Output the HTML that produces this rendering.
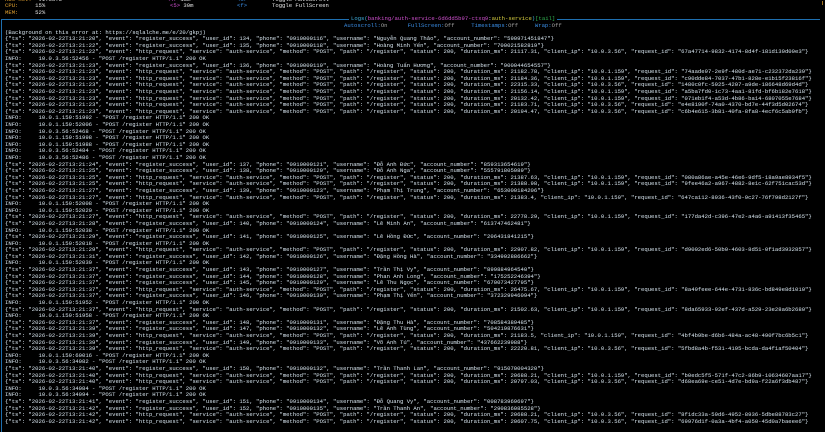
<!DOCTYPE html>
<html><head><meta charset="utf-8"><style>
html,body{margin:0;padding:0;background:#000;width:825px;height:432px;overflow:hidden}
body{position:relative;font-family:"Liberation Mono","DejaVu Sans Mono",monospace;font-size:5.58px;color:#d6e4ee}
.a{position:absolute;white-space:pre;line-height:6.6px}
.o{color:#e0a030}.w{color:#e8e8e8}.m{color:#d050d0}.b{color:#3a8ee6}.c{color:#40b0e0}.y{color:#d8d040}.g{color:#30b050}.gr{color:#a0a0a0}
#log{left:5px;top:29.7px;color:#d6e4ee}
</style></head><body>
<div class="a" style="left:5px;top:-3px"><span class="o">K8s Rev:</span>  <span class="w">v1.33.5</span></div>
<div class="a" style="left:5px;top:3px"><span class="o">CPU:</span>     <span class="w">15%</span></div>
<div class="a" style="left:5px;top:9.5px"><span class="o">MEM:</span>     <span class="w">52%</span></div>
<div class="a" style="left:167px;top:-3px"><span class="m">&lt;4&gt;</span> <span class="w">15m</span></div>
<div class="a" style="left:170px;top:3px"><span class="m">&lt;5&gt;</span> <span class="w">30m</span></div>
<div class="a" style="left:237px;top:-3px"><span class="b">&lt;s&gt;</span></div>
<div class="a" style="left:237px;top:3px"><span class="b">&lt;f&gt;</span></div>
<div class="a" style="left:272px;top:-3px"><span class="w">Toggle AutoScroll</span></div>
<div class="a" style="left:272px;top:3px"><span class="w">Toggle FullScreen</span></div>
<div style="position:absolute;left:822px;top:1px;width:1px;height:4px;background:#a07020"></div>
<div style="position:absolute;left:1px;top:19px;width:819px;height:1px;background:#1e6fb0"></div>
<div style="position:absolute;left:1px;top:19px;width:1px;height:413px;background:#1e6fb0"></div>
<div class="a" style="left:349px;top:15.5px;background:#000;padding:0 2px"><span class="c">Logs(</span><span class="m">banking/auth-service-6d6dd5b97-ctxq9</span><span class="w">:</span><span class="y">auth-service</span><span class="c">)</span><span class="g">[tail]</span></div>
<div class="a" style="left:344px;top:22.5px"><span class="b">Autoscroll:</span><span class="gr">On</span>      <span class="b">FullScreen:</span><span class="gr">Off</span>     <span class="b">Timestamps:</span><span class="gr">Off</span>     <span class="b">Wrap:</span><span class="gr">Off</span></div>
<div class="a" id="log">(Background on this error at: https://sqlalche.me/e/20/gkpj)
{"ts": "2026-02-22T13:21:20", "event": "register_success", "user_id": 134, "phone": "0910000116", "username": "Nguyễn Quang Thảo", "account_number": "590971451847"}
{"ts": "2026-02-22T13:21:22", "event": "register_success", "user_id": 135, "phone": "0910000118", "username": "Hoàng Minh Yến", "account_number": "700021582819"}
{"ts": "2026-02-22T13:21:22", "event": "http_request", "service": "auth-service", "method": "POST", "path": "/register", "status": 200, "duration_ms": 21117.31, "client_ip": "10.0.3.56", "request_id": "67a47714-9832-4174-8d4f-181d130d00e3"}
INFO:     10.0.3.56:52456 - "POST /register HTTP/1.1" 200 OK
{"ts": "2026-02-22T13:21:23", "event": "register_success", "user_id": 136, "phone": "0910000119", "username": "Hoàng Tuấn Hương", "account_number": "900044654557"}
{"ts": "2026-02-22T13:21:23", "event": "http_request", "service": "auth-service", "method": "POST", "path": "/register", "status": 200, "duration_ms": 21182.78, "client_ip": "10.0.1.159", "request_id": "74aade97-2e9f-480d-ae71-c232372da239"}
{"ts": "2026-02-22T13:21:23", "event": "http_request", "service": "auth-service", "method": "POST", "path": "/register", "status": 200, "duration_ms": 21184.36, "client_ip": "10.0.1.159", "request_id": "c90dde84-7037-47b1-828e-e1b15f23816f"}
{"ts": "2026-02-22T13:21:23", "event": "http_request", "service": "auth-service", "method": "POST", "path": "/register", "status": 200, "duration_ms": 22315.33, "client_ip": "10.0.3.56", "request_id": "1480c0fc-5925-4207-a9de-186648d69d4d"}
{"ts": "2026-02-22T13:21:23", "event": "http_request", "service": "auth-service", "method": "POST", "path": "/register", "status": 200, "duration_ms": 21156.14, "client_ip": "10.0.1.159", "request_id": "a5ba7fd0-1c73-4aa1-81fd-bf6b182e7618"}
{"ts": "2026-02-22T13:21:23", "event": "http_request", "service": "auth-service", "method": "POST", "path": "/register", "status": 200, "duration_ms": 20132.42, "client_ip": "10.0.1.159", "request_id": "071eb1f4-a53d-4b86-ba14-6807055e7684"}
{"ts": "2026-02-22T13:21:23", "event": "http_request", "service": "auth-service", "method": "POST", "path": "/register", "status": 200, "duration_ms": 21183.71, "client_ip": "10.0.3.56", "request_id": "e4e8190f-74a0-4370-bd7e-44f3d5d02674"}
{"ts": "2026-02-22T13:21:23", "event": "http_request", "service": "auth-service", "method": "POST", "path": "/register", "status": 200, "duration_ms": 20194.47, "client_ip": "10.0.3.56", "request_id": "c6b4e615-3b81-40fa-8fa8-4ecf6c5ab0fb"}
INFO:     10.0.1.159:51992 - "POST /register HTTP/1.1" 200 OK
INFO:     10.0.1.159:52006 - "POST /register HTTP/1.1" 200 OK
INFO:     10.0.3.56:52468 - "POST /register HTTP/1.1" 200 OK
INFO:     10.0.1.159:51998 - "POST /register HTTP/1.1" 200 OK
INFO:     10.0.1.159:51988 - "POST /register HTTP/1.1" 200 OK
INFO:     10.0.3.56:52484 - "POST /register HTTP/1.1" 200 OK
INFO:     10.0.3.56:52486 - "POST /register HTTP/1.1" 200 OK
{"ts": "2026-02-22T13:21:24", "event": "register_success", "user_id": 137, "phone": "0910000121", "username": "Đỗ Anh Đức", "account_number": "859313654619"}
{"ts": "2026-02-22T13:21:25", "event": "register_success", "user_id": 138, "phone": "0910000120", "username": "Đỗ Anh Nga", "account_number": "555791805089"}
{"ts": "2026-02-22T13:21:25", "event": "http_request", "service": "auth-service", "method": "POST", "path": "/register", "status": 200, "duration_ms": 21387.63, "client_ip": "10.0.1.159", "request_id": "080a86ae-a45e-46e6-9df5-18a9ae8934f5"}
{"ts": "2026-02-22T13:21:25", "event": "http_request", "service": "auth-service", "method": "POST", "path": "/register", "status": 200, "duration_ms": 21388.98, "client_ip": "10.0.1.159", "request_id": "9fee46a2-a967-4882-8e1c-62f751cac53d"}
{"ts": "2026-02-22T13:21:27", "event": "register_success", "user_id": 139, "phone": "0910000123", "username": "Phạm Thị Trung", "account_number": "653000184206"}
{"ts": "2026-02-22T13:21:27", "event": "http_request", "service": "auth-service", "method": "POST", "path": "/register", "status": 200, "duration_ms": 21383.4, "client_ip": "10.0.1.159", "request_id": "647ca112-8936-43f0-9c27-76f798d2127f"}
INFO:     10.0.1.159:52008 - "POST /register HTTP/1.1" 200 OK
INFO:     10.0.1.159:52020 - "POST /register HTTP/1.1" 200 OK
{"ts": "2026-02-22T13:21:27", "event": "http_request", "service": "auth-service", "method": "POST", "path": "/register", "status": 200, "duration_ms": 22778.29, "client_ip": "10.0.1.159", "request_id": "177da42d-c396-47e2-a4a6-a91413f35465"}
{"ts": "2026-02-22T13:21:28", "event": "register_success", "user_id": 140, "phone": "0910000124", "username": "Lê Minh An", "account_number": "613747462481"}
INFO:     10.0.1.159:52038 - "POST /register HTTP/1.1" 200 OK
{"ts": "2026-02-22T13:21:29", "event": "register_success", "user_id": 141, "phone": "0910000125", "username": "Lê Hồng Đức", "account_number": "206431841215"}
INFO:     10.0.1.159:52018 - "POST /register HTTP/1.1" 200 OK
{"ts": "2026-02-22T13:21:29", "event": "http_request", "service": "auth-service", "method": "POST", "path": "/register", "status": 200, "duration_ms": 22907.82, "client_ip": "10.0.1.159", "request_id": "d9002ed6-50b0-4603-8d51-0f1ad3932857"}
{"ts": "2026-02-22T13:21:31", "event": "register_success", "user_id": 142, "phone": "0910000126", "username": "Đặng Hồng Hà", "account_number": "334902886662"}
INFO:     10.0.1.159:52030 - "POST /register HTTP/1.1" 200 OK
{"ts": "2026-02-22T13:21:37", "event": "register_success", "user_id": 143, "phone": "0910000127", "username": "Trần Thị Vy", "account_number": "899884964540"}
{"ts": "2026-02-22T13:21:37", "event": "register_success", "user_id": 144, "phone": "0910000128", "username": "Phan Anh Long", "account_number": "175252246394"}
{"ts": "2026-02-22T13:21:37", "event": "register_success", "user_id": 145, "phone": "0910000129", "username": "Lê Thu Ngọc", "account_number": "670073427795"}
{"ts": "2026-02-22T13:21:37", "event": "http_request", "service": "auth-service", "method": "POST", "path": "/register", "status": 200, "duration_ms": 26475.67, "client_ip": "10.0.1.159", "request_id": "8a49feee-644e-4731-836c-bd849e8d1010"}
{"ts": "2026-02-22T13:21:37", "event": "register_success", "user_id": 146, "phone": "0910000130", "username": "Phạm Thị Yến", "account_number": "372329946094"}
INFO:     10.0.1.159:51952 - "POST /register HTTP/1.1" 200 OK
{"ts": "2026-02-22T13:21:37", "event": "http_request", "service": "auth-service", "method": "POST", "path": "/register", "status": 200, "duration_ms": 21502.63, "client_ip": "10.0.1.159", "request_id": "8da65933-92ef-437d-a529-23e28a6b2680"}
INFO:     10.0.1.159:51958 - "POST /register HTTP/1.1" 200 OK
{"ts": "2026-02-22T13:21:37", "event": "register_success", "user_id": 148, "phone": "0910000131", "username": "Đặng Thu Hà", "account_number": "708584389485"}
{"ts": "2026-02-22T13:21:39", "event": "register_success", "user_id": 147, "phone": "0910000132", "username": "Lê Anh Tùng", "account_number": "504219876631"}
{"ts": "2026-02-22T13:21:39", "event": "http_request", "service": "auth-service", "method": "POST", "path": "/register", "status": 200, "duration_ms": 21183.5, "client_ip": "10.0.1.159", "request_id": "4bf4b9be-d6b6-484a-ac48-490f7bc6b5c1"}
{"ts": "2026-02-22T13:21:39", "event": "register_success", "user_id": 149, "phone": "0910000133", "username": "Võ Anh Tú", "account_number": "437662239988"}
{"ts": "2026-02-22T13:21:39", "event": "http_request", "service": "auth-service", "method": "POST", "path": "/register", "status": 200, "duration_ms": 22220.81, "client_ip": "10.0.3.56", "request_id": "5fbd8a4b-f531-4195-bcda-da4f1af50404"}
INFO:     10.0.1.159:60016 - "POST /register HTTP/1.1" 200 OK
INFO:     10.0.3.56:34082 - "POST /register HTTP/1.1" 200 OK
{"ts": "2026-02-22T13:21:40", "event": "register_success", "user_id": 150, "phone": "0910000132", "username": "Trần Thanh Lan", "account_number": "915070004320"}
{"ts": "2026-02-22T13:21:40", "event": "http_request", "service": "auth-service", "method": "POST", "path": "/register", "status": 200, "duration_ms": 20688.21, "client_ip": "10.0.1.159", "request_id": "b0edc5f5-571f-47c2-86b9-10634607aa17"}
{"ts": "2026-02-22T13:21:40", "event": "http_request", "service": "auth-service", "method": "POST", "path": "/register", "status": 200, "duration_ms": 20797.03, "client_ip": "10.0.3.56", "request_id": "d68ea69e-ce51-4d7e-bd9a-f22a6f3db487"}
INFO:     10.0.3.56:34084 - "POST /register HTTP/1.1" 200 OK
INFO:     10.0.3.56:34094 - "POST /register HTTP/1.1" 200 OK
{"ts": "2026-02-22T13:21:41", "event": "register_success", "user_id": 151, "phone": "0910000134", "username": "Đỗ Quang Vy", "account_number": "008783969697"}
{"ts": "2026-02-22T13:21:42", "event": "register_success", "user_id": 152, "phone": "0910000135", "username": "Trần Thanh An", "account_number": "290836085528"}
{"ts": "2026-02-22T13:21:42", "event": "http_request", "service": "auth-service", "method": "POST", "path": "/register", "status": 200, "duration_ms": 20688.21, "client_ip": "10.0.3.56", "request_id": "8f1dc33a-59d6-4952-8936-5dbe88783c27"}
{"ts": "2026-02-22T13:21:42", "event": "http_request", "service": "auth-service", "method": "POST", "path": "/register", "status": 200, "duration_ms": 20607.75, "client_ip": "10.0.3.56", "request_id": "69976d1f-0a3a-4bf4-a050-45d0a7baeee6"}</div>
</body></html>
